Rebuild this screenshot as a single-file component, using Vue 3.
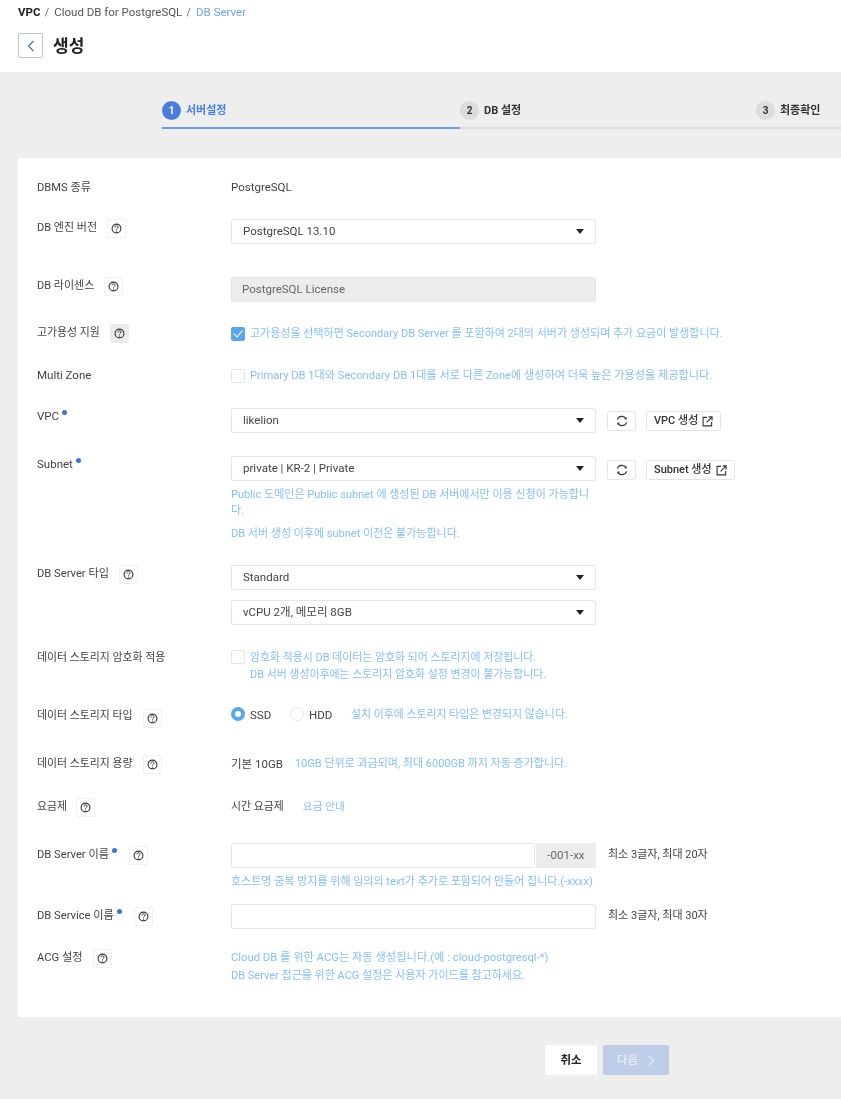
<script setup>
const steps = [
  { n: 1, label: '서버설정', cls: 'active' },
  { n: 2, label: 'DB 설정', cls: 'second' },
  { n: 3, label: '최종확인', cls: 'third' }
]
</script>

<template>
  <div class="page">
    <svg class="defs" width="0" height="0" aria-hidden="true">
      <symbol id="q" viewBox="0 0 10 10">
        <circle cx="5" cy="5" r="4" fill="none" stroke="#333" stroke-width="1" />
        <path d="M3.6 4c0-1 .6-1.5 1.4-1.5S6.4 3 6.4 3.8C6.4 4.8 5 4.9 5 6" fill="none" stroke="#333" stroke-width=".9" />
        <circle cx="5" cy="7.3" r=".55" fill="#333" />
      </symbol>
      <symbol id="refresh" viewBox="0 0 12 12">
        <path d="M1.4 4.6A4.8 4.8 0 0 1 10 3.6M10.6 7.4A4.8 4.8 0 0 1 2 8.4" fill="none" stroke="#333" stroke-width="1.1" />
        <path d="M10.7 1.9 10.6 4.6 8 4.2ZM1.3 10.1 1.4 7.4 4 7.8Z" fill="#333" />
      </symbol>
      <symbol id="ext" viewBox="0 0 12 12">
        <path d="M5.5 1.5H1.2v9.3h9.3V6.5" fill="none" stroke="#333" stroke-width="1.2" />
        <path d="M5 7 10.6 1.4M7.2 1h3.8v3.8" fill="none" stroke="#333" stroke-width="1.2" />
      </symbol>
    </svg>

    <header class="top">
      <nav class="crumbs">
        <b>VPC</b><span class="sep">/</span><span>Cloud DB for PostgreSQL</span><span class="sep">/</span><span class="cur">DB Server</span>
      </nav>
      <div class="title">
        <button class="back" type="button" aria-label="뒤로">
          <svg width="8" height="12" viewBox="0 0 8 12"><path d="M6.5 1 1.5 6l5 5" fill="none" stroke="#4a6fa8" stroke-width="1.2" /></svg>
        </button>
        <h1>생성</h1>
      </div>
    </header>

    <main class="body">
      <div class="steps">
        <div v-for="s in steps" :key="s.n" class="step" :class="s.cls">
          <span class="num">{{ s.n }}</span><span class="slabel">{{ s.label }}</span>
        </div>
      </div>

      <section class="card">
        <div class="row r-dbms">
          <div class="label s112">DBMS 종류</div>
          <div class="ctrl text">PostgreSQL</div>
        </div>

        <div class="row r-engine">
          <div class="label s11">DB 엔진 버전<span class="help m10"><svg class="qi"><use href="#q" /></svg></span></div>
          <div class="ctrl"><div class="select">PostgreSQL 13.10</div></div>
        </div>

        <div class="row r-license">
          <div class="label s11">DB 라이센스<span class="help m10"><svg class="qi"><use href="#q" /></svg></span></div>
          <div class="ctrl"><div class="select disabled">PostgreSQL License</div></div>
        </div>

        <div class="row r-ha">
          <div class="label s109">고가용성 지원<span class="help m10 hot"><svg class="qi"><use href="#q" /></svg></span></div>
          <div class="ctrl check-line">
            <span class="check on"><svg width="14" height="14" viewBox="0 0 14 14"><path d="M2.6 6.6 6 10l5.4-6.4" fill="none" stroke="#fff" stroke-width="1.1" /></svg></span>
            <span class="hint">고가용성을 선택하면 Secondary DB Server 를 포함하여 2대의 서버가 생성되며 추가 요금이 발생합니다.</span>
          </div>
        </div>

        <div class="row r-mz">
          <div class="label tight">Multi Zone</div>
          <div class="ctrl check-line">
            <span class="check"></span>
            <span class="hint s1115 nudge">Primary DB 1대와 Secondary DB 1대를 서로 다른 Zone에 생성하여 더욱 높은 가용성을 제공합니다.</span>
          </div>
        </div>

        <div class="row r-vpc">
          <div class="label tight">VPC<i class="dot"></i></div>
          <div class="ctrl inline">
            <div class="select">likelion</div>
            <button class="icon-btn" type="button" aria-label="새로고침"><svg class="ri"><use href="#refresh" /></svg></button>
            <button class="link-btn" type="button">VPC 생성<svg class="ei"><use href="#ext" /></svg></button>
          </div>
        </div>

        <div class="row r-subnet">
          <div class="label tight">Subnet<i class="dot"></i></div>
          <div class="ctrl">
            <div class="inline">
              <div class="select">private | KR-2 | Private</div>
              <button class="icon-btn low" type="button" aria-label="새로고침"><svg class="ri"><use href="#refresh" /></svg></button>
              <button class="link-btn low" type="button">Subnet 생성<svg class="ei"><use href="#ext" /></svg></button>
            </div>
            <p class="hint block wrap">Public 도메인은 Public subnet 에 생성된 DB 서버에서만 이용 신청이 가능합니다.</p>
            <p class="hint block after">DB 서버 생성 이후에 subnet 이전은 불가능합니다.</p>
          </div>
        </div>

        <div class="row r-type">
          <div class="label s112">DB Server 타입<span class="help m10"><svg class="qi"><use href="#q" /></svg></span></div>
          <div class="ctrl stack">
            <div class="select">Standard</div>
            <div class="select">vCPU 2개, 메모리 8GB</div>
          </div>
        </div>

        <div class="row r-enc">
          <div class="label s109">데이터 스토리지 암호화 적용</div>
          <div class="ctrl check-line top-align">
            <span class="check"></span>
            <div class="hint two s109">
              <div>암호화 적용시 DB 데이터는 암호화 되어 스토리지에 저장됩니다.</div>
              <div>DB 서버 생성이후에는 스토리지 암호화 설정 변경이 불가능합니다.</div>
            </div>
          </div>
        </div>

        <div class="row r-dtype">
          <div class="label s109">데이터 스토리지 타입<span class="help m10 drop"><svg class="qi"><use href="#q" /></svg></span></div>
          <div class="ctrl radios">
            <span class="radio on"></span><span class="text rl ssd">SSD</span>
            <span class="radio"></span><span class="text rl hdd">HDD</span>
            <span class="hint s109">설치 이후에 스토리지 타입은 변경되지 않습니다.</span>
          </div>
        </div>

        <div class="row r-cap">
          <div class="label s109">데이터 스토리지 용량<span class="help m10"><svg class="qi"><use href="#q" /></svg></span></div>
          <div class="ctrl pair cap">
            <span class="text">기본 10GB</span>
            <span class="hint">10GB 단위로 과금되며, 최대 6000GB 까지 자동 증가합니다.</span>
          </div>
        </div>

        <div class="row r-price">
          <div class="label s109">요금제<span class="help m9"><svg class="qi"><use href="#q" /></svg></span></div>
          <div class="ctrl pair price">
            <span class="text s109">시간 요금제</span>
            <span class="hint s107">요금 안내</span>
          </div>
        </div>

        <div class="row r-name">
          <div class="label shift3 s112">DB Server 이름<i class="dot"></i><span class="help m12"><svg class="qi"><use href="#q" /></svg></span></div>
          <div class="ctrl">
            <div class="inline">
              <div class="group">
                <div class="input grow"></div>
                <div class="suffix">-001-xx</div>
              </div>
              <span class="text limit s11">최소 3글자, 최대 20자</span>
            </div>
            <p class="hint block name-hint">호스트명 중복 방지를 위해 임의의 text가 추가로 포함되어 만들어 집니다.(-xxxx)</p>
          </div>
        </div>

        <div class="row r-service">
          <div class="label shift3 s112">DB Service 이름<i class="dot"></i><span class="help m12"><svg class="qi"><use href="#q" /></svg></span></div>
          <div class="ctrl inline">
            <div class="input"></div>
            <span class="text limit s11">최소 3글자, 최대 30자</span>
          </div>
        </div>

        <div class="row r-acg">
          <div class="label s112">ACG 설정<span class="help m10"><svg class="qi"><use href="#q" /></svg></span></div>
          <div class="ctrl hint two acg">
            <div class="s1125">Cloud DB 를 위한 ACG는 자동 생성됩니다.(예 : cloud-postgresql-*)</div>
            <div>DB Server 접근을 위한 ACG 설정은 사용자 가이드를 참고하세요.</div>
          </div>
        </div>
      </section>

      <footer class="actions">
        <button class="btn cancel" type="button">취소</button>
        <button class="btn next" type="button">다음
          <svg width="7" height="11" viewBox="0 0 7 11"><path d="M1 .8 5.8 5.5 1 10.2" fill="none" stroke="#fff" stroke-width="1" /></svg>
        </button>
      </footer>
    </main>
  </div>
</template>

<style scoped>
.page {
  width: 841px;
  height: 1099px;
  overflow: hidden;
  font-family: Roboto, "Noto Sans CJK KR", sans-serif;
  font-size: 11.5px;
  line-height: 16px;
  color: #444;
  background: #eee;
  filter: blur(0.4px);
}
.defs { position: absolute; }
.top {
  height: 72px;
  background: #fff;
  padding-left: 18px;
  box-sizing: border-box;
}
.crumbs {
  display: flex;
  align-items: center;
  height: 24px;
  color: #555;
  font-size: 11.5px;
}
.crumbs b { color: #222; font-weight: 700; }
.sep { margin: 0 5px 0 4px; color: #777; }
.cur { color: #6ea2e8; }
.title {
  display: flex;
  align-items: center;
  gap: 10px;
  margin-top: 9px;
}
.back {
  width: 25px;
  height: 25px;
  padding: 0;
  display: flex;
  align-items: center;
  justify-content: center;
  background: #fff;
  border: 1px solid #b9c7dc;
  border-radius: 2px;
}
h1 {
  margin: 0;
  font-size: 17px;
  font-weight: 700;
  color: #222;
  line-height: 24px;
}
.body { height: 1027px; }
.steps {
  display: flex;
  height: 57px;
  padding: 28px 0 0 162px;
  box-sizing: border-box;
}
.step {
  height: 29px;
  box-sizing: border-box;
  display: flex;
  align-items: flex-start;
  padding-top: 1px;
  border-bottom: 2px solid #dcdcdc;
  color: #333;
  font-weight: 700;
  font-size: 11px;
}
.step.active { width: 298px; border-bottom-color: #6f9ce6; color: #4a7ed8; }
.step.second { width: 296px; }
.step.third { flex: 1; }
.num {
  width: 19px;
  height: 19px;
  border-radius: 50%;
  background: #dcdcdc;
  color: #333;
  font-size: 10px;
  line-height: 19px;
  text-align: center;
}
.active .num { background: #4a7ed8; color: #fff; }
.slabel { margin-left: 5px; line-height: 19px; }

.card {
  margin: 29px 0 0 18px;
  height: 859px;
  padding: 21px 0 0 19px;
  box-sizing: border-box;
  background: #fff;
  border-radius: 2px 0 0 2px;
}
.row { display: flex; align-items: flex-start; }
.label {
  width: 194px;
  flex: none;
  display: flex;
  align-items: flex-start;
  color: #444;
  line-height: 18px;
}
.label.tight { line-height: 16px; }
.ctrl { min-width: 0; }
.text { color: #444; }
.s107 { font-size: 10.7px; }
.s109 { font-size: 10.9px; }
.s11 { font-size: 11px; }
.s112 { font-size: 11.2px; }
.s1115 { font-size: 11.15px; }
.s1125 { font-size: 11.25px; }

.r-dbms { height: 16px; }
.r-engine { margin-top: 24px; }
.r-license { margin-top: 33px; }
.r-ha { margin-top: 22px; }
.r-mz { margin-top: 24px; height: 16px; }
.r-vpc { margin-top: 25px; }
.r-subnet { margin-top: 23px; }
.r-type { margin-top: 23px; }
.r-enc { margin-top: 24px; height: 33px; }
.r-dtype { margin-top: 25px; }
.r-cap { margin-top: 27px; }
.r-price { margin-top: 24px; }
.r-name { margin-top: 26px; }
.r-service { margin-top: 15px; }
.r-acg { margin-top: 20px; }

.help {
  width: 19px;
  height: 19px;
  box-sizing: border-box;
  flex: none;
  display: inline-flex;
  align-items: center;
  justify-content: center;
  background: #fff;
  border: 1px solid #f0f0f0;
  border-radius: 2px;
}
.m9 { margin-left: 9px; }
.m10 { margin-left: 10px; }
.m12 { margin-left: 12px; }
.hot { background: #ececec; border-color: #ececec; }
.drop { margin-top: 2px; }
.qi { width: 11px; height: 11px; }
.dot {
  width: 5px;
  height: 5px;
  border-radius: 50%;
  background: #3f74d6;
  margin: 2px 0 0 3px;
  flex: none;
}

.shift3 { padding-top: 3px; }
.select {
  width: 365px;
  height: 25px;
  box-sizing: border-box;
  flex: none;
  padding: 0 11px;
  line-height: 23.5px;
  position: relative;
  background: #fff;
  border: 1px solid #e6e6e6;
  border-radius: 2px;
  color: #444;
}
.select:not(.disabled)::after {
  content: "";
  position: absolute;
  right: 11px;
  top: 9px;
  border-left: 4px solid transparent;
  border-right: 4px solid transparent;
  border-top: 5px solid #222;
}
.disabled { background: #ececec; color: #666; padding-left: 10px; }
.inline { display: flex; align-items: flex-start; }
.stack { display: flex; flex-direction: column; gap: 10px; }

.icon-btn, .link-btn {
  height: 20px;
  box-sizing: border-box;
  margin-top: 3px;
  padding: 0;
  display: inline-flex;
  align-items: center;
  justify-content: center;
  background: #fff;
  border: 1px solid #e6e6e6;
  border-radius: 2px;
  font: inherit;
  font-weight: 500;
  color: #333;
}
.low { margin-top: 4px; }
.icon-btn { width: 29px; margin-left: 11px; }
.link-btn { margin-left: 10px; padding: 0 7px; gap: 4px; font-size: 11px; }
.ri { width: 12px; height: 12px; }
.ei { width: 11px; height: 11px; }

.hint { color: #85bff5; font-size: 11px; }
.hint.s109 { font-size: 10.9px; }
.hint.s107 { font-size: 10.7px; }
.hint.s1115 { font-size: 11.15px; }
.nudge { padding-top: 1px; }
.block { margin: 0; }
.wrap { width: 365px; margin-top: 6px; }
.after { margin-top: 7px; }
.check-line { display: flex; align-items: center; gap: 5px; }
.top-align { align-items: flex-start; }
.check {
  width: 14px;
  height: 14px;
  box-sizing: border-box;
  flex: none;
  border: 1px solid #e4e4e4;
  border-radius: 2px;
  background: #fff;
  display: block;
}
.check.on { border: 0; background: #5aa6ec; }
.r-ha .check-line { height: 19px; }
.r-enc .check { margin-top: 1px; }
.two { padding-top: 1px; }
.two > div + div { margin-top: 1px; }
.acg > div + div { margin-top: 2px; }
.acg .s1125 { font-size: 11.25px; }

.radios { display: flex; align-items: center; height: 16px; }
.radio {
  width: 14px;
  height: 14px;
  box-sizing: border-box;
  flex: none;
  border-radius: 50%;
  border: 1px solid #e6e6e6;
  background: #fff;
  margin-top: -2px;
}
.radio.on { border: 4px solid #5aa6ec; }
.rl { margin-left: 5px; }
.ssd { width: 40px; }
.hdd { width: 42px; }

.pair { display: flex; }
.pair > span { padding-top: 1px; }
.cap { gap: 12px; }
.price { gap: 19px; }

.group { display: flex; width: 365px; height: 25px; flex: none; }
.input {
  width: 365px;
  height: 25px;
  box-sizing: border-box;
  flex: none;
  background: #fff;
  border: 1px solid #e6e6e6;
  border-radius: 2px;
}
.input.grow { width: 304px; }
.suffix {
  flex: 1;
  background: #ececec;
  border-radius: 0 2px 2px 0;
  text-align: center;
  line-height: 25px;
  color: #666;
  margin-left: 1px;
}
.limit { margin: 4px 0 0 12px; }
.name-hint { margin-top: 6px; height: 15px; }

.actions {
  display: flex;
  gap: 6px;
  margin-top: 28px;
  padding-left: 545px;
}
.btn {
  height: 30px;
  border: 0;
  border-radius: 2px;
  padding: 0;
  font: inherit;
  font-weight: 700;
  display: inline-flex;
  align-items: center;
  justify-content: center;
}
.cancel { width: 52px; background: #fff; color: #222; }
.next { width: 66px; background: #bfcde8; color: #e9eef8; gap: 10px; font-weight: 500; }
</style>

<style>
html, body { margin: 0; background: #eee; }
</style>
